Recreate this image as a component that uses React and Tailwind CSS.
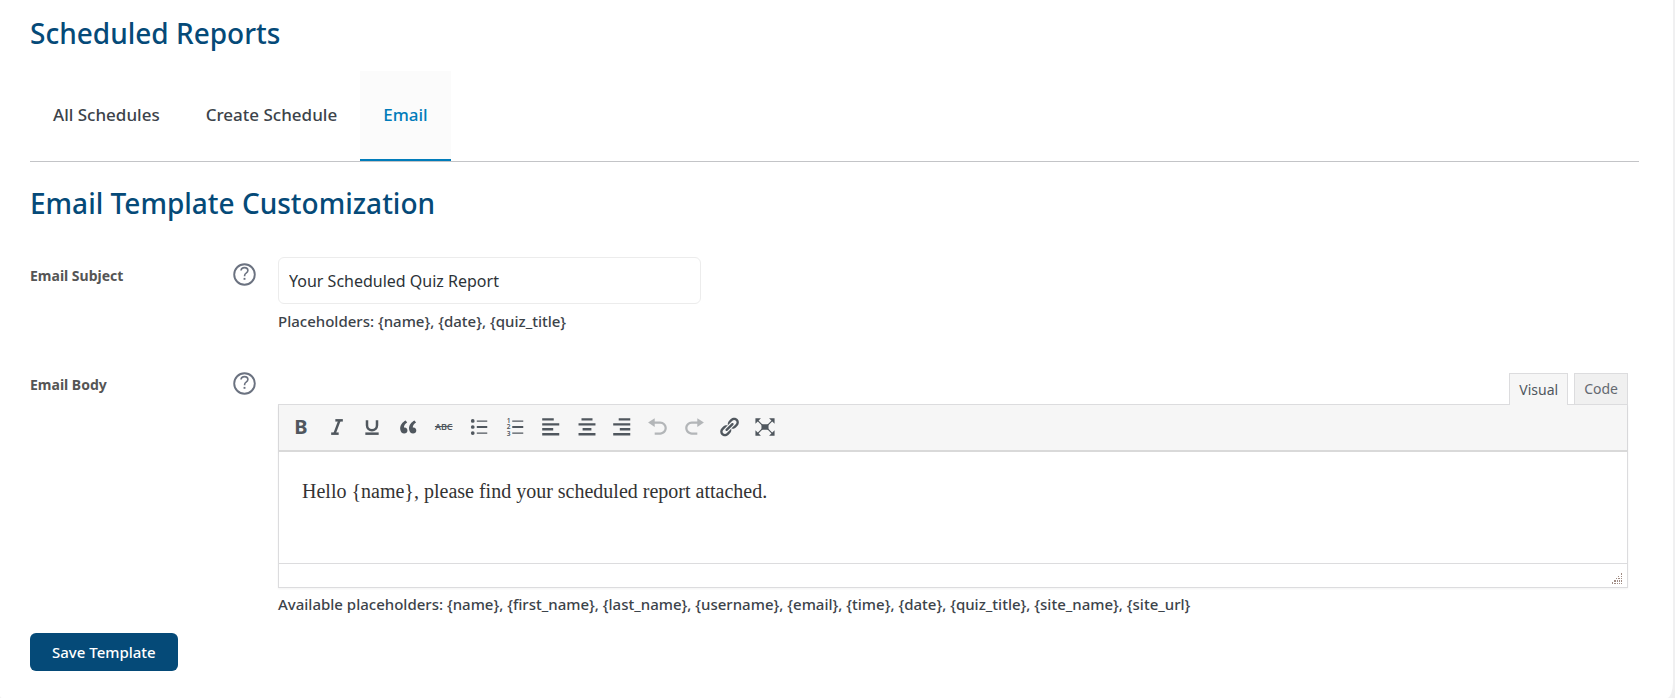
import React, { useState } from 'react'
import { Italic, Underline } from 'lucide-react'

const tabs = ['All Schedules', 'Create Schedule', 'Email']

const DashIcon = ({ children }) => (
    <svg viewBox="0 0 20 20" className="w-[22px] h-[22px]" fill="currentColor" aria-hidden="true">
        {children}
    </svg>
)

const tools = [
    { name: 'Bold', icon: <span className="text-xl leading-5 font-bold">B</span> },
    { name: 'Italic', icon: <Italic size={20} strokeWidth={3} strokeLinecap="butt" /> },
    { name: 'Underline', icon: <Underline size={20} strokeWidth={3} strokeLinecap="butt" /> },
    {
        name: 'Blockquote',
        icon: <DashIcon><path d="M9.49 13.22c0-.74-.2-1.38-.61-1.9-.62-.78-1.83-.88-2.53-.72-.29-1.65 1.11-3.75 2.92-4.65L7.88 4c-2.73 1.3-5.42 4.28-4.96 8.05C3.21 14.43 4.59 16 6.54 16c.85 0 1.56-.25 2.12-.75s.83-1.18.83-2.03zm8.05 0c0-.74-.2-1.38-.61-1.9-.63-.78-1.83-.88-2.53-.72-.29-1.65 1.11-3.75 2.92-4.65L15.93 4c-2.73 1.3-5.41 4.28-4.95 8.05.29 2.38 1.66 3.95 3.61 3.95.85 0 1.56-.25 2.12-.75s.83-1.18.83-2.03z" /></DashIcon>
    },
    { name: 'Strikethrough', icon: <span className="text-[9px] leading-3 font-semibold line-through">ABC</span> },
    {
        name: 'Bulleted list',
        icon: (
            <DashIcon>
                <circle cx="4.3" cy="4.5" r="1.7" />
                <circle cx="4.3" cy="10" r="1.7" />
                <circle cx="4.3" cy="15.5" r="1.7" />
                <path d="M8 4h9.5v1.2H8zM8 9.2h9.5v1.6H8zM8 15h9.5v1.2H8z" />
            </DashIcon>
        )
    },
    {
        name: 'Numbered list',
        icon: (
            <DashIcon>
                <text x="2.4" y="6.4" fontSize="6" fontWeight="600">1</text>
                <text x="2.4" y="12.2" fontSize="6" fontWeight="600">2</text>
                <text x="2.4" y="18" fontSize="6" fontWeight="600">3</text>
                <path d="M7.5 4h10v1.2h-10zM7.5 9.2h10v1.6h-10zM7.5 15h10v1.2h-10z" />
            </DashIcon>
        )
    },
    { name: 'Align left', icon: <DashIcon><path d="M12.5 4.2V2H2v2.2zM17.5 8.7V6.5H2v2.2zM12 13.2V11H2v2.2zM17.5 17.7V15.5H2v2.2z" /></DashIcon> },
    { name: 'Align center', icon: <DashIcon><path d="M15 4.2V2H5v2.2zM17.7 8.7V6.5H2.3v2.2zM14 13.2V11H6v2.2zM17.7 17.7V15.5H2.3v2.2z" /></DashIcon> },
    { name: 'Align right', icon: <DashIcon><path d="M17.5 4.2V2H7v2.2zM17.5 8.7V6.5H2v2.2zM17.5 13.2V11H8v2.2zM17.5 17.7V15.5H2v2.2z" /></DashIcon> },
    { name: 'Undo', disabled: true, icon: <DashIcon><path d="M12 5H7V2L1 6l6 4V7h5c2.2 0 4 1.8 4 4s-1.8 4-4 4H7v2h5c3.3 0 6-2.7 6-6s-2.7-6-6-6z" /></DashIcon> },
    { name: 'Redo', disabled: true, icon: <DashIcon><path d="M8 5h5V2l6 4-6 4V7H8c-2.2 0-4 1.8-4 4s1.8 4 4 4h5v2H8c-3.3 0-6-2.7-6-6s2.7-6 6-6z" /></DashIcon> },
    {
        name: 'Insert link',
        icon: <DashIcon><path d="M17.74 2.76c1.68 1.69 1.68 4.41 0 6.1l-1.53 1.52c-1.12 1.12-2.7 1.47-4.14 1.09l2.62-2.61.76-.77.76-.76c.84-.84.84-2.2 0-3.04-.84-.85-2.2-.85-3.04 0l-.77.76-3.38 3.38c-.37-1.44-.02-3.02 1.1-4.14l1.52-1.53c1.69-1.68 4.42-1.68 6.1 0zM8.59 13.43l5.34-5.34c.42-.42.42-1.1 0-1.52-.44-.43-1.13-.39-1.53 0l-5.33 5.34c-.42.42-.42 1.1 0 1.52.44.43 1.13.39 1.52 0zm-.76 2.29l4.14-4.15c.38 1.44.03 3.02-1.09 4.14l-1.52 1.53c-1.69 1.68-4.41 1.68-6.1 0-1.68-1.68-1.68-4.42 0-6.1l1.53-1.52c1.12-1.12 2.7-1.47 4.14-1.1l-4.14 4.15c-.85.84-.85 2.2 0 3.05.84.84 2.2.84 3.04 0z" /></DashIcon>
    },
    {
        name: 'Fullscreen',
        icon: (
            <DashIcon>
                <path d="M6.8 7.5h6.4v5H6.8zM1.3 2h5L1.3 7zM18.7 2h-5l5 5zM1.3 18h5l-5-5zM18.7 18h-5l5-5z" />
                <path d="M3 3.7l5 5M17 3.7l-5 5M3 16.3l5-5M17 16.3l-5-5" stroke="currentColor" strokeWidth="1.1" />
            </DashIcon>
        )
    }
]

const HelpButton = ({ label }) => (
    <button type="button" aria-label={label} className="w-[23px] h-[23px] text-[#6b7280] cursor-pointer">
        <svg viewBox="0 0 23 23" fill="none" stroke="currentColor" aria-hidden="true">
            <circle cx="11.5" cy="11.5" r="10.3" strokeWidth="1.9" />
            <path d="M8 7.5c.2-1.9 1.6-2.9 3.5-2.9 2 0 3.4 1 3.4 2.8 0 1.3-.8 2.1-1.8 2.8-1.1.7-1.5 1.2-1.5 2.5v.6" strokeWidth="1.6" />
            <path d="M11.5 14.9v1.9" strokeWidth="1.9" />
        </svg>
    </button>
)

const FieldRow = ({ id, label, children }) => (
    <div className="flex items-start">
        <label htmlFor={id} className="w-[203px] shrink-0 pt-[9px] text-sm leading-5 font-bold text-[#555]">{label}</label>
        <div className="w-[45px] shrink-0 pt-[6px]">
            <HelpButton label={`${label} help`} />
        </div>
        <div className="flex-1 min-w-0">{children}</div>
    </div>
)

const App = () => {
    const [subject, setSubject] = useState('Your Scheduled Quiz Report')
    const [body, setBody] = useState('Hello {name}, please find your scheduled report attached.')

    const handleSubmit = (e) => {
        e.preventDefault()
    }

    return (
        <div className="min-h-screen bg-[#f0f0f1] pr-[2px] font-['Noto_Sans','Open_Sans',sans-serif]">
            <main className="min-h-screen bg-white rounded-br-[6px_16px] rounded-bl-[2px_3px] pl-[30px] pr-[34px] pt-[15px] pb-6">
                <h1 className="text-[28px] leading-9 font-medium text-[#054a78]">Scheduled Reports</h1>
                <nav className="mt-5 flex border-b border-[#c3c4c7]">
                    {tabs.map((tab) => (
                        <a
                            key={tab}
                            href="#"
                            className={tab === 'Email'
                                ? 'px-[23px] py-8 text-[17px] leading-6 font-medium text-[#007cba] bg-[#fbfbfb] border-b-2 border-[#007cba]'
                                : 'px-[23px] py-8 text-[17px] leading-6 font-medium text-[#3c434a] border-b-2 border-transparent'}
                        >
                            {tab}
                        </a>
                    ))}
                </nav>
                <h2 className="mt-[23px] text-[28px] leading-9 font-medium text-[#054a78]">Email Template Customization</h2>

                <form onSubmit={handleSubmit}>
                    <div className="mt-9 flex flex-col gap-[35px]">
                        <FieldRow id="subject" label="Email Subject">
                            <input
                                id="subject"
                                type="text"
                                value={subject}
                                onChange={(e) => setSubject(e.target.value)}
                                className="block w-full max-w-[423px] h-[47px] px-[10px] text-base text-[#2c3338] bg-white border border-[#ececec] rounded-md outline-none"
                            />
                            <p className="mt-[7px] text-[15px] leading-5 font-medium text-[#3c434a]">{'Placeholders: {name}, {date}, {quiz_title}'}</p>
                        </FieldRow>

                        <FieldRow id="body" label="Email Body">
                            <div className="mr-[11px] pt-[6px]">
                                <div className="flex justify-end items-end gap-[6px] text-sm leading-5">
                                    <button type="button" className="relative top-px h-8 px-[9px] bg-[#f6f6f6] border border-b-0 border-[#dcdcde] text-[#50575e]">Visual</button>
                                    <button type="button" className="h-[31px] px-[9px] bg-[#f0f0f0] border border-b-0 border-[#dcdcde] text-[#646970]">Code</button>
                                </div>
                                <div className="border border-[#dcdcde] shadow-xs">
                                    <div className="h-[47px] pl-[11px] pb-[2px] flex items-center bg-[#f6f6f6] border-b-2 border-[#d9d9d9] shadow-xs">
                                        <div className="w-[486px] flex justify-between text-[#50575e]">
                                            {tools.map(({ name, icon, disabled }) => (
                                                <button
                                                    key={name}
                                                    type="button"
                                                    aria-label={name}
                                                    disabled={disabled}
                                                    className="w-[22px] h-[22px] flex items-center justify-center disabled:opacity-40"
                                                >
                                                    {icon}
                                                </button>
                                            ))}
                                        </div>
                                    </div>
                                    <textarea
                                        id="body"
                                        value={body}
                                        onChange={(e) => setBody(e.target.value)}
                                        className="block w-full h-[111px] px-[23px] py-[25px] resize-none outline-none bg-white text-xl leading-7 text-[#333] font-['Liberation_Serif',serif]"
                                    />
                                    <div className="h-6 flex items-end justify-end border-t border-[#dcdcde] pr-1 pb-[3px]">
                                        <svg width="11" height="11" viewBox="0 0 11 11" fill="#a08c84" aria-hidden="true">
                                            <path d="M9 0h1v2H9zM6 3h1v1H6zM9 3h1v1H9zM4 5h1v1H4zM6 5h2v1H6zM9 5h1v1H9zM2 7h2v2H2zM5 7h1v2H5zM7 7h1v2H7zM9 7h1v2H9zM0 9h1v2H0zM2 10h2v1H2zM5 10h1v1H5zM7 10h1v1H7zM9 10h1v1H9z" />
                                        </svg>
                                    </div>
                                </div>
                            </div>
                            <p className="mt-[6px] text-[15px] leading-5 font-medium text-[#3c434a]">
                                {'Available placeholders: {name}, {first_name}, {last_name}, {username}, {email}, {time}, {date}, {quiz_title}, {site_name}, {site_url}'}
                            </p>
                        </FieldRow>
                    </div>

                    <button type="submit" className="mt-[19px] h-[38px] px-[22px] rounded-md bg-[#054a78] text-[15px] leading-5 font-medium text-white cursor-pointer">
                        Save Template
                    </button>
                </form>
            </main>
        </div>
    )
}

export default App
